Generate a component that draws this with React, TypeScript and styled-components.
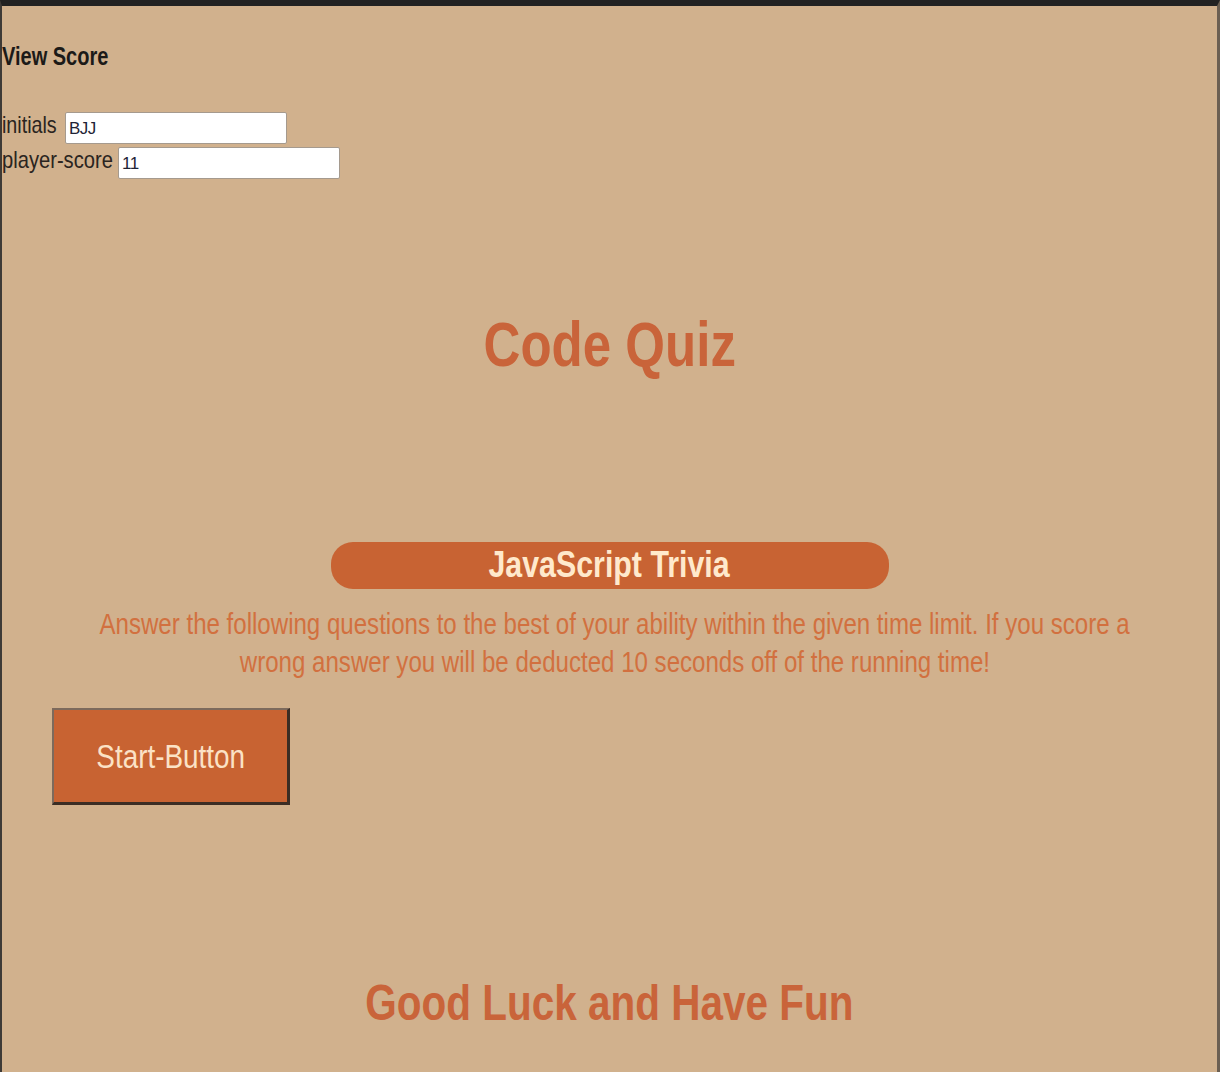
import React from "react";
import styled, { createGlobalStyle } from "styled-components";

const FONT = `"Liberation Sans Narrow", "Arial Narrow", "Liberation Sans", Arial, sans-serif`;

const Global = createGlobalStyle`
  html { background: #d1b18d; overflow-x: hidden; }
  body {
    margin: 0;
    min-height: 100vh;
    box-sizing: border-box;
    background: #d1b18d;
    border-top: 6px solid #222222;
    border-left: 2px solid #3e3a36;
    border-right: 3px solid #6b5f52;
    font-family: ${FONT};
  }
`;

/* Condensed text: the reference uses a narrow face, so the glyphs are squeezed horizontally */
const Squeeze = styled.span<{ $origin?: "left" | "center"; $k?: number }>`
  display: inline-block;
  white-space: nowrap;
  transform: scaleX(${(p) => p.$k ?? 0.82});
  transform-origin: ${(p) => p.$origin ?? "center"} center;
`;

const Page = styled.div`
  display: flex;
  flex-direction: column;
`;

const ScoreLink = styled.div`
  margin-top: 35px;
  font-size: 25px;
  font-weight: bold;
  line-height: 30px;
  color: #1c1a18;
`;

const Form = styled.form`
  margin-top: 40px;
  display: flex;
  flex-direction: column;
  gap: 1px;
`;

const Row = styled.div`
  display: flex;
  align-items: center;
  height: 34px;
`;

const Label = styled.label<{ $w: number }>`
  flex: none;
  width: ${(p) => p.$w}px;
  font-size: 24px;
  line-height: 24px;
  color: #2a2420;
  margin-bottom: 6px;
`;

const Input = styled.input`
  box-sizing: border-box;
  width: 222px;
  height: 32px;
  border: 1px solid #a59a8e;
  border-radius: 2px;
  background: #ffffff;
  padding: 2px 3px 0;
  font-family: ${FONT};
  font-size: 17px;
  letter-spacing: -0.5px;
  color: #1f2436;
  outline: none;
`;

const Title = styled.h1`
  margin: 128px 0 0;
  text-align: center;
  font-size: 63px;
  line-height: 72px;
  font-weight: bold;
  color: #c9643a;
`;

const Pill = styled.h2`
  align-self: center;
  box-sizing: border-box;
  width: 558px;
  height: 47px;
  margin: 162px 0 0;
  border-radius: 22px;
  background: #c86333;
  color: #ffe9cc;
  text-align: center;
  font-size: 37px;
  line-height: 45px;
  font-weight: bold;
`;

const Intro = styled.p`
  margin: 16px 0 0;
  padding-left: 10px;
  display: flex;
  flex-direction: column;
  align-items: center;
  font-size: 29px;
  line-height: 38px;
  color: #d2703f;
`;

const StartButton = styled.button`
  align-self: flex-start;
  box-sizing: border-box;
  width: 238px;
  height: 97px;
  margin: 27px 0 0 50px;
  padding: 0;
  background: #c86332;
  border-style: solid;
  border-width: 2px 3px 3px 2px;
  border-color: #7d6a5c #3b2d24 #3b2d24 #7d6a5c;
  color: #fbe2c6;
  font-family: ${FONT};
  font-size: 34px;
  cursor: pointer;
`;

const Farewell = styled.h2`
  margin: 168px 0 0;
  text-align: center;
  font-size: 50px;
  line-height: 60px;
  font-weight: bold;
  color: #c9643a;
`;

export default function App() {
  return (
    <>
      <Global />
      <Page>
        <ScoreLink>
          <Squeeze $origin="left" $k={0.8}>View Score</Squeeze>
        </ScoreLink>
        <Form onSubmit={(e) => e.preventDefault()}>
          <Row>
            <Label $w={63}>
              <Squeeze $origin="left">initials</Squeeze>
            </Label>
            <Input defaultValue="BJJ" />
          </Row>
          <Row>
            <Label $w={116}>
              <Squeeze $origin="left" $k={0.84}>player-score</Squeeze>
            </Label>
            <Input defaultValue="11" />
          </Row>
        </Form>
        <Title>
          <Squeeze $k={0.81}>Code Quiz</Squeeze>
        </Title>
        <Pill>
          <Squeeze>JavaScript Trivia</Squeeze>
        </Pill>
        <Intro>
          <Squeeze $k={0.83}>
            Answer the following questions to the best of your ability within the given time limit. If you score a
          </Squeeze>
          <Squeeze $k={0.83}>wrong answer you will be deducted 10 seconds off of the running time!</Squeeze>
        </Intro>
        <StartButton>
          <Squeeze>Start-Button</Squeeze>
        </StartButton>
        <Farewell>
          <Squeeze $k={0.81}>Good Luck and Have Fun</Squeeze>
        </Farewell>
      </Page>
    </>
  );
}
